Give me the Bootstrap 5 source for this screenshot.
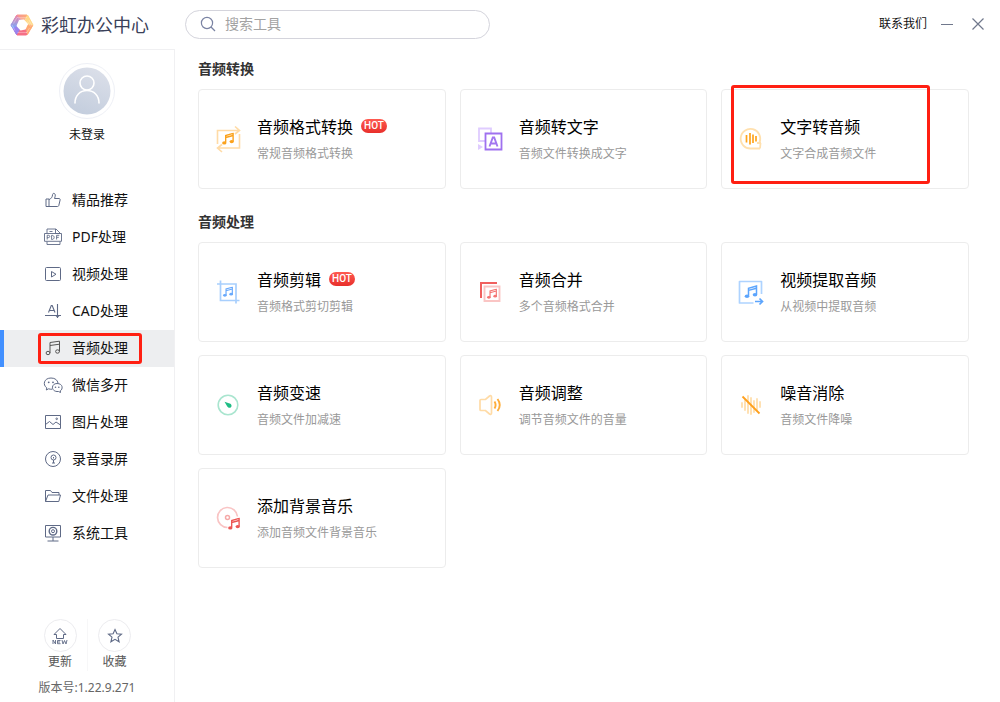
<!DOCTYPE html>
<html lang="zh-CN">
<head>
<meta charset="utf-8">
<meta name="viewport" content="width=device-width, initial-scale=1">
<title>彩虹办公中心</title>
<link href="https://cdn.jsdelivr.net/npm/bootstrap@5.3.0/dist/css/bootstrap.min.css" rel="stylesheet">
<style>
  :root { --side: 175px; --line: #f0f0f2; --ink: #5f6a86; --mark-red: #ff1f12; }
  body { font-family: "Noto Sans", "Noto Sans CJK SC", sans-serif; font-size: 14px; line-height: 20px; color: #111; background: #fff; }
  a { color: inherit; text-decoration: none; }
  svg { display: block; flex: none; fill: none; }

  .topbar { height: 50px; }
  .brand-box { width: var(--side); padding-left: 10px; gap: 7px; border-bottom: 1px solid var(--line); font-size: 18px; color: #3a4159; }
  .search-wrap, .win-tools { padding-bottom: 2px; }
  .search-box { width: 305px; height: 29px; margin-left: 10px; padding: 0 14px; gap: 9px; border: 1px solid #d4d4dc; border-radius: 15px; color: #7a83a3; }
  .search-box input { border: 0; outline: 0; padding: 0; min-width: 0; background: transparent; font-size: 14px; line-height: 20px; }
  .search-box input::placeholder { color: #a3a3a3; opacity: 1; }
  .win-tools { gap: 13px; padding-right: 15px; font-size: 12px; }
  .win-tools button { border: 0; padding: 0; background: none; color: #70788c; }

  .sidebar { width: var(--side); border-right: 1px solid var(--line); }
  .user-box { padding-top: 13px; gap: 6px; font-size: 12px; }
  .avatar-ring { border: 1px solid #eef0f6; padding: 3px; }
  .menu-list { margin-top: 37px; }
  .menu-item { height: 37px; padding: 0 0 2px 43px; gap: 9px; position: relative; }
  .menu-item svg { color: var(--ink); }
  .menu-item.active { background: #edeef0; box-shadow: inset 4px 0 #4290ff; }
  .menu-item.active svg { color: #555; }
  .marked::after { content: ""; position: absolute; border: 3px solid var(--mark-red); border-radius: 3px; pointer-events: none; }
  .menu-item.marked::after { left: 38px; top: 3px; bottom: 3px; width: 104px; }

  .foot-box { font-size: 12px; color: #555; padding-bottom: 5px; }
  .foot-link { width: 54px; gap: 0; line-height: 18px; }
  .foot-link + .foot-link { border-left: 1px solid #f7f7f8; }
  .foot-ring { width: 33px; height: 33px; border: 1px solid #ececef; color: var(--ink); margin-bottom: 1px; }
  .version-line { line-height: 18px; margin-top: 8px; color: #666; }

  .content-area { padding: 9px 31px 20px 23px; }
  .group-title { font-size: 14px; line-height: 20px; font-weight: 700; color: #333; margin: 0 0 10px; }
  .tool-group + .tool-group { margin-top: 23px; }
  .tool-row { --bs-gutter-x: 14px; --bs-gutter-y: 13px; }
  .tool-card { position: relative; min-height: 100px; padding: 0 15px; gap: 15px; border: 1px solid #ececec; border-radius: 4px; }
  .tool-card.marked::after { left: 9px; top: -5px; width: 199px; height: 99px; }
  .tool-name { font-size: 16px; line-height: 22px; gap: 8px; color: #000; }
  .tool-note { font-size: 12px; line-height: 18px; margin-top: 7px; color: #999; }
  .hot-tag { width: 26px; height: 14px; border-radius: 7px; font: 500 10px/14px Roboto, sans-serif; color: #fff; background: linear-gradient(#ff5a50, #e82f2b); text-align: center; margin-top: -2px; }
</style>
</head>
<body>
<svg width="0" height="0" class="position-absolute" aria-hidden="true">
  <symbol id="notes" viewBox="0 0 14 14">
    <path d="M4.500 10.800V3.200L12.500 1v8.400M4.500 5.400l8-2.200" fill="none" stroke="currentColor" stroke-width="1.500"/>
    <ellipse cx="3" cy="11.200" rx="2.300" ry="1.800" fill="currentColor"/>
    <ellipse cx="11" cy="9.800" rx="2.300" ry="1.800" fill="currentColor"/>
  </symbol>
</svg>

<div class="d-flex flex-column min-vh-100">
  <header class="topbar d-flex">
    <div class="brand-box d-flex align-items-center flex-shrink-0">
      <svg width="24" height="24" viewBox="0 0 24 24" aria-hidden="true">
        <defs>
          <linearGradient id="lg1" x1="0" y1="0" x2="1" y2="0"><stop stop-color="#f58aa0"/><stop offset="1" stop-color="#ffb36f"/></linearGradient>
          <linearGradient id="lg2" x1="0" y1="0" x2="0" y2="1"><stop stop-color="#ee86a8"/><stop offset="1" stop-color="#78a6fa"/></linearGradient>
        </defs>
        <g stroke-linejoin="round" stroke-width="1">
          <path d="M7 2h10l2.500 4.500-3 1.500H8L3.500 8z" fill="url(#lg1)" stroke="url(#lg1)"/>
          <path d="M17.500 2 23 12l-2 3.500-6-8z" fill="#ffd98a" stroke="#ffd98a"/>
          <path d="M22.500 12.500l-5 9h-3l-1.500-3 5-6.500z" fill="#ffa873" stroke="#ffa873"/>
          <path d="M16.500 22H7l-2.500-4.500 4-1.500h7z" fill="#f56f86" stroke="#f56f86"/>
          <path d="M6.500 21.500 1 12l2.500-3L9.500 16.500z" fill="#9a83ee" stroke="#9a83ee"/>
          <path d="M1 12 6.500 2.500l4 4L6 13l-3 2z" fill="url(#lg2)" stroke="url(#lg2)"/>
        </g>
        <g stroke="#fff" stroke-width=".5" opacity=".6"><path d="M7 4.500h10M19 7l3 6M19.500 15l-3 5M17 19.500H7.500M5 17.500 2 12M3.500 10.500l3.500-6M8 6h8M17.500 8.500l3 5"/></g>
        <path d="M9 7l5-.500 4 4.500-2.500 5.500-5 1L6.500 13z" fill="#fff"/>
      </svg>
      <span>彩虹办公中心</span>
    </div>
    <div class="search-wrap d-flex align-items-center">
      <label class="search-box d-flex align-items-center">
        <svg width="16" height="16" viewBox="0 0 16 16" stroke="currentColor" stroke-width="1.200" aria-hidden="true"><circle cx="7" cy="7" r="5.600"/><path d="M11 11l4 4"/></svg>
        <input type="text" class="flex-grow-1" placeholder="搜索工具" aria-label="搜索工具">
      </label>
    </div>
    <div class="win-tools d-flex align-items-center ms-auto">
      <a href="#contact">联系我们</a>
      <button type="button" aria-label="最小化"><svg width="14" height="14" viewBox="0 0 14 14" stroke="currentColor"><path d="M1 7.500h12"/></svg></button>
      <button type="button" class="ms-1" aria-label="关闭"><svg width="14" height="14" viewBox="0 0 14 14" stroke="currentColor" stroke-width="1.200"><path d="M1.500 1.500l11 11M12.500 1.500l-11 11"/></svg></button>
    </div>
  </header>

  <div class="d-flex flex-grow-1">
    <aside class="sidebar d-flex flex-column flex-shrink-0">
      <a href="#login" class="user-box d-flex flex-column align-items-center">
        <span class="avatar-ring rounded-circle">
          <svg width="48" height="48" viewBox="0 0 48 48" aria-hidden="true">
            <defs><linearGradient id="av" x1=".7" y1="0" x2=".3" y2="1"><stop stop-color="#dbdfe9"/><stop offset="1" stop-color="#c3cddd"/></linearGradient></defs>
            <circle cx="24" cy="24" r="23.500" fill="url(#av)"/>
            <g stroke="#fff" stroke-width="1.600" stroke-linecap="round"><circle cx="24" cy="16" r="7"/><path d="M12 36c0-7.500 5-12.500 12-12.500S36 28.500 36 36"/></g>
          </svg>
        </span>
        <span>未登录</span>
      </a>

      <nav class="menu-list">
        <a href="#featured" class="menu-item d-flex align-items-center">
          <svg width="20" height="20" viewBox="0 0 20 20" stroke="currentColor" stroke-linejoin="round"><path d="M3 9h3v7.500H3zM6 9.500c2-.5 3.500-2.500 3.600-5 0-1.600 2.600-1.600 2.700.6 0 1.200-.4 2.300-.8 3.400H16c.9 0 1.300.7 1.100 1.500l-1.300 5.500c-.2.700-.7 1-1.300 1H6"/></svg>精品推荐</a>
        <a href="#pdf" class="menu-item d-flex align-items-center">
          <svg width="20" height="20" viewBox="0 0 20 20" stroke="currentColor" stroke-width=".9"><path d="M4 6V2h9l4 4v1M12.500 2v4.500H17M4 14.500v3h13v-3M6.500 4.500h3"/><path d="M1.500 6.500h17v7.800h-17z"/><path d="M4.200 12.500V8.300h1.300c1.700 0 1.700 2.300 0 2.300H4.200M8.600 8.300v4.200c3.400.2 3.400-4.400 0-4.200zM13.600 12.500V8.300h2.700M13.600 10.300h2.200"/></svg>PDF处理</a>
        <a href="#video" class="menu-item d-flex align-items-center">
          <svg width="20" height="20" viewBox="0 0 20 20" stroke="currentColor" stroke-linejoin="round"><rect x="2.500" y="3.500" width="15" height="13" rx="1"/><path d="M8.500 7.500v5.500l4.500-2.750z"/></svg>视频处理</a>
        <a href="#cad" class="menu-item d-flex align-items-center">
          <svg width="20" height="20" viewBox="0 0 20 20" stroke="currentColor" stroke-width="1.100"><path d="M5.500 11.500 8.300 4.500h.9l2.800 7M6.500 9.500H11M14.500 3v14M2 14.500h16M13 14.500 14.500 16l1.500-1.500"/></svg>CAD处理</a>
        <a href="#audio" class="menu-item active marked d-flex align-items-center" aria-current="page">
          <svg width="20" height="20" viewBox="0 0 20 20" stroke="currentColor"><ellipse cx="5" cy="15" rx="1.900" ry="1.700"/><ellipse cx="14.500" cy="13.500" rx="1.900" ry="1.700"/><path d="M7 15V4.500l9.500-1.300v10.300M7 7.500l9.500-1.300"/></svg>音频处理</a>
        <a href="#wechat" class="menu-item d-flex align-items-center">
          <svg width="20" height="20" viewBox="0 0 20 20" stroke="currentColor"><path d="M9 14.200c-1.100.1-2.400 0-3.400-.4L3.300 15l.5-2.100C-.7 9.800 1 3 8 3c4.200 0 6.500 2.200 7 5"/><path d="M14 8.500c6.300 0 6 6 3.300 7.300l.2 1.700-2-1c-7.800.7-7.800-8-1.500-8z"/><g fill="currentColor" stroke="none"><circle cx="5.700" cy="7.300" r=".9"/><circle cx="10" cy="7.300" r=".9"/><circle cx="12.500" cy="12.300" r=".8"/><circle cx="15.800" cy="12.300" r=".8"/></g></svg>微信多开</a>
        <a href="#image" class="menu-item d-flex align-items-center">
          <svg width="20" height="20" viewBox="0 0 20 20" stroke="currentColor"><path d="M2.500 3.500h15v13h-15zM2.500 12.500l4-3 3.500 3 3-2.500 4.500 3"/><circle cx="13.700" cy="6.800" r=".8"/></svg>图片处理</a>
        <a href="#record" class="menu-item d-flex align-items-center">
          <svg width="20" height="20" viewBox="0 0 20 20" stroke="currentColor"><circle cx="10" cy="10" r="7.500"/><circle cx="10.500" cy="8.500" r="2.500"/><path d="M10.500 11v3M9 14h3M10.500 8v1.500"/></svg>录音录屏</a>
        <a href="#file" class="menu-item d-flex align-items-center">
          <svg width="20" height="20" viewBox="0 0 20 20" stroke="currentColor" stroke-linejoin="round"><path d="M2.500 15.500V4.500h5l1.500 2h7V9M2.500 15.500 5 9h12.500l-1.700 6.500z"/></svg>文件处理</a>
        <a href="#system" class="menu-item d-flex align-items-center">
          <svg width="20" height="20" viewBox="0 0 20 20" stroke="currentColor"><path d="M2.500 2.500h15v11.500h-15zM10 14v4M4.500 18h11"/><circle cx="10" cy="8.200" r="3.800" stroke-width="1.400"/><circle cx="10" cy="8.200" r="1.500"/></svg>系统工具</a>
      </nav>

      <div class="foot-box mt-auto text-center">
        <div class="d-flex justify-content-center">
          <a href="#update" class="foot-link d-flex flex-column align-items-center">
            <span class="foot-ring rounded-circle d-flex align-items-center justify-content-center">
              <svg width="20" height="20" viewBox="0 0 20 20" stroke="currentColor" stroke-linejoin="round"><path d="M10 2.500 16 8.500h-2.500v4h-7v-4H4z"/><path d="M3 18v-4l2.500 4v-4M10.500 14.500H7.500v3.200h3M7.500 16h2.500M12 14l1 4 1.500-3.500L16 18l1-4" stroke-width=".9"/></svg>
            </span>更新</a>
          <a href="#favorites" class="foot-link d-flex flex-column align-items-center">
            <span class="foot-ring rounded-circle d-flex align-items-center justify-content-center">
              <svg width="16" height="16" viewBox="0 0 16 16" stroke="currentColor" stroke-width="1.100"><path d="M8 1.500l1.900 4.300 4.600.4-3.500 3 1.100 4.600L8 11.400l-4.100 2.400L5 9.200l-3.500-3 4.600-.4z"/></svg>
            </span>收藏</a>
        </div>
        <div class="version-line">版本号:1.22.9.271</div>
      </div>
    </aside>

    <main class="content-area flex-grow-1">
      <section class="tool-group">
        <h2 class="group-title">音频转换</h2>
        <div class="row row-cols-3 tool-row gy-0">
          <div class="col"><a href="#format" class="tool-card d-flex align-items-center">
            <svg width="28" height="28" viewBox="0 0 28 28"><g stroke="#ffdba6" stroke-width="1.600"><path d="M3.500 19V5.500h22M21 1.500l4.500 4L21 9M25.500 9v14H3M8 19.500 3.500 23 8 27"/></g><use href="#notes" x="7.500" y="7.500" width="13" height="13" color="#fba21c"/></svg>
            <div><div class="tool-name d-flex align-items-center">音频格式转换<span class="hot-tag">HOT</span></div><div class="tool-note">常规音频格式转换</div></div></a></div>
          <div class="col"><a href="#speech" class="tool-card d-flex align-items-center">
            <svg width="28" height="28" viewBox="0 0 28 28"><path d="M9 16H3V3.500h12V8" stroke="#dfccff" stroke-width="1.800"/><path d="M2 19l5 3-5 3z" fill="#dfccff"/><path d="M9.500 8.500h16v16h-16z" stroke="#9f71ef" stroke-width="1.800"/><path d="M13.500 21.500 16.800 12.500h1.400l3.300 9M14.800 18.500h5.400" stroke="#a276f0" stroke-width="1.900"/></svg>
            <div><div class="tool-name">音频转文字</div><div class="tool-note">音频文件转换成文字</div></div></a></div>
          <div class="col"><a href="#tts" class="tool-card marked d-flex align-items-center">
            <svg width="28" height="28" viewBox="0 0 28 28"><path d="M22.500 17.500A9.800 9.800 0 1 0 14 23.500h9M20 18h4M23.500 18l-.500 5.500" stroke="#ffe0ae" stroke-width="1.800"/><path d="M9.500 10v7.500M13 8v11.500M16 9.500V18M19 11v5.500" stroke="#ffa41c" stroke-width="1.700"/></svg>
            <div><div class="tool-name">文字转音频</div><div class="tool-note">文字合成音频文件</div></div></a></div>
        </div>
      </section>

      <section class="tool-group">
        <h2 class="group-title">音频处理</h2>
        <div class="row row-cols-3 tool-row">
          <div class="col"><a href="#cut" class="tool-card d-flex align-items-center">
            <svg width="28" height="28" viewBox="0 0 28 28"><path d="M6.500 2.500v20h19M3 6h19v19.500" stroke="#a8cffd" stroke-width="1.700"/><use href="#notes" x="8.500" y="8.500" width="11" height="11" color="#68a9fc"/></svg>
            <div><div class="tool-name d-flex align-items-center">音频剪辑<span class="hot-tag">HOT</span></div><div class="tool-note">音频格式剪切剪辑</div></div></a></div>
          <div class="col"><a href="#merge" class="tool-card d-flex align-items-center">
            <svg width="28" height="28" viewBox="0 0 28 28"><path d="M5 20V5h16" stroke="#f0605e" stroke-width="2"/><path d="M8.500 8.500h15v14.500h-15z" stroke="#fac5c4" stroke-width="1.900"/><use href="#notes" x="10.500" y="10.500" width="11" height="11" color="#f47573"/></svg>
            <div><div class="tool-name">音频合并</div><div class="tool-note">多个音频格式合并</div></div></a></div>
          <div class="col"><a href="#extract" class="tool-card d-flex align-items-center">
            <svg width="28" height="28" viewBox="0 0 28 28"><path d="M16.500 25H2.500V3.500h22V16" stroke="#aed3ff" stroke-width="1.700" stroke-linejoin="round"/><path d="M18 23.500h7M22.500 20.500l3 3-3 3" stroke="#5ca5fd" stroke-width="1.700"/><use href="#notes" x="7" y="7" width="14" height="14" color="#5ca5fd"/></svg>
            <div><div class="tool-name">视频提取音频</div><div class="tool-note">从视频中提取音频</div></div></a></div>
          <div class="col"><a href="#speed" class="tool-card d-flex align-items-center">
            <svg width="28" height="28" viewBox="0 0 28 28"><circle cx="14" cy="14" r="9.800" stroke="#a9e5cf" stroke-width="1.600"/><path d="M10.500 10.800l5.900 1.900c1.800 1.200 1.500 4-.8 4-1.300 0-2-.6-2.500-1.500z" fill="#1fbd85"/></svg>
            <div><div class="tool-name">音频变速</div><div class="tool-note">音频文件加减速</div></div></a></div>
          <div class="col"><a href="#adjust" class="tool-card d-flex align-items-center">
            <svg width="28" height="28" viewBox="0 0 28 28"><path d="M4 9.500c0-.7.500-1 1-1h4.500L13.500 5c1-.6 2-.2 2 1v16c0 1.200-1 1.600-2 1l-4-3.500H5c-.6 0-1-.4-1-1z" stroke="#ffdba6" stroke-width="1.700"/><path d="M18.500 10.500q2.200 3.500 0 7M21.500 8q4.500 6 0 12" stroke="#ffad39" stroke-width="1.900"/></svg>
            <div><div class="tool-name">音频调整</div><div class="tool-note">调节音频文件的音量</div></div></a></div>
          <div class="col"><a href="#denoise" class="tool-card d-flex align-items-center">
            <svg width="28" height="28" viewBox="0 0 28 28"><path d="M5 12v4M8 9v10M11 5v17M14 7v16M17 10v11M20 8v11M23 11v5" stroke="#ffe0b0" stroke-width="1.900" stroke-linecap="round"/><path d="M5.500 5.500l17 17" stroke="#ffa01c" stroke-width="1.800"/></svg>
            <div><div class="tool-name">噪音消除</div><div class="tool-note">音频文件降噪</div></div></a></div>
          <div class="col"><a href="#bgm" class="tool-card d-flex align-items-center">
            <svg width="28" height="28" viewBox="0 0 28 28"><path d="M13.500 23.500A10 10 0 1 1 23.500 12.500" stroke="#f9c4c4" stroke-width="1.700"/><circle cx="13.500" cy="13.500" r="2" stroke="#f5a9a8" stroke-width="1.500"/><use href="#notes" x="13.500" y="13.500" width="13" height="13" color="#ec5654"/></svg>
            <div><div class="tool-name">添加背景音乐</div><div class="tool-note">添加音频文件背景音乐</div></div></a></div>
        </div>
      </section>
    </main>
  </div>
</div>
<script src="https://cdn.jsdelivr.net/npm/bootstrap@5.3.0/dist/js/bootstrap.bundle.min.js"></script>
</body>
</html>
